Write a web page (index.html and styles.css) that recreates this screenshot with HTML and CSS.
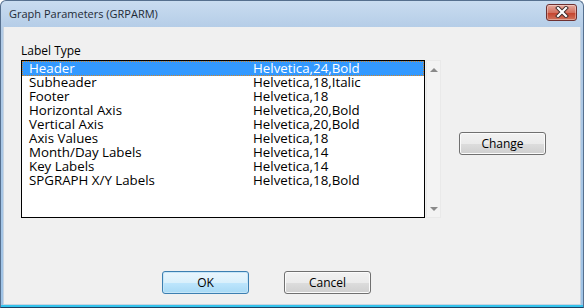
FILE: index.html
```html
<!DOCTYPE html>
<html lang="en">
<head>
  <meta charset="UTF-8">
  <title>Graph Parameters (GRPARM)</title>
  <link rel="stylesheet" href="styles.css">
</head>
<body>

<div class="window">
  <div class="titlebar">
    <span class="title">Graph Parameters (GRPARM)</span>
    <div class="close">
      <svg width="18" height="12" viewBox="0 0 18 12">
        <path d="M5 2 L13 10 M13 2 L5 10" stroke="#3b2a2a" stroke-width="4" stroke-linecap="square"/>
        <path d="M5 2 L13 10 M13 2 L5 10" stroke="#ffffff" stroke-width="2.2" stroke-linecap="square"/>
      </svg>
    </div>
  </div>

  <div class="client">
    <div class="main">
      <div class="list-col">
        <div class="caption">Label Type</div>
        <div class="list-wrap">
          <ul class="listbox">
            <li class="selected"><span class="name">Header</span><span>Helvetica,24,Bold</span></li>
            <li><span class="name">Subheader</span><span>Helvetica,18,Italic</span></li>
            <li><span class="name">Footer</span><span>Helvetica,18</span></li>
            <li><span class="name">Horizontal Axis</span><span>Helvetica,20,Bold</span></li>
            <li><span class="name">Vertical Axis</span><span>Helvetica,20,Bold</span></li>
            <li><span class="name">Axis Values</span><span>Helvetica,18</span></li>
            <li><span class="name">Month/Day Labels</span><span>Helvetica,14</span></li>
            <li><span class="name">Key Labels</span><span>Helvetica,14</span></li>
            <li><span class="name">SPGRAPH X/Y Labels</span><span>Helvetica,18,Bold</span></li>
          </ul>
          <div class="scrollbar">
            <span class="arrow up"></span>
            <span class="arrow down"></span>
          </div>
        </div>
      </div>
      <button class="btn change">Change</button>
    </div>

    <div class="actions">
      <button class="btn default">OK</button>
      <button class="btn">Cancel</button>
    </div>
  </div>
</div>

</body>
</html>
```

FILE: styles.css
```css
* {
  box-sizing: border-box;
}
body {
  margin: 0;
  font-family: 'Open Sans', 'Noto Sans', sans-serif;
  font-size: 12px;
  color: #000;
  background: #fff;
}
.window {
  width: 584px;
  height: 308px;
  display: flex;
  flex-direction: column;
  border: 1px solid #56708f;
  border-bottom-color: #1a3f63;
  border-radius: 6px 6px 0 0;
  background: linear-gradient(#c9dcf0, #b2cbe6 30px, #9fc3e6);
  padding: 0 2px 2px 2px;
  box-shadow: inset 0 -2px 0 #33c3ec;
}
.titlebar {
  height: 26px;
  display: flex;
  align-items: center;
  justify-content: space-between;
  padding: 0 4px 0 6px;
}
.title {
  font-size: 11px;
  color: #1e2a36;
  margin-top: -1px;
}
.close {
  width: 31px;
  height: 17px;
  margin-top: -4px;
  border: 1px solid #6e3030;
  border-radius: 3px;
  background: linear-gradient(#e6a99d, #d2705f 50%, #c4442f 55%, #d0735c);
  display: flex;
  align-items: center;
  justify-content: center;
  box-shadow: inset 0 0 0 1px rgba(255,255,255,0.35);
}
.client {
  flex: 1;
  background: #f0f0f0;
  border: 1px solid #c9d4e0;
  border-top: none;
  display: flex;
  flex-direction: column;
}
.main {
  display: flex;
  padding: 14px 0 0 17px;
}
.caption {
  height: 19px;
  line-height: 16px;
  padding-top: 2px;
}
.list-wrap {
  display: flex;
  gap: 1px;
}
.listbox {
  list-style: none;
  margin: 0;
  padding: 0;
  width: 404px;
  height: 158px;
  border: 1px solid #000;
  background: #fff;
  font-size: 13.3px;
}
.listbox li {
  display: flex;
  height: 14px;
  line-height: 15px;
  padding-left: 7px;
}
.listbox .name {
  width: 224px;
}
.listbox li.selected {
  background: #3399ff;
  color: #fff;
  outline: 1px dotted #d0852a;
  outline-offset: -1px;
  height: 15px;
  margin-bottom: -1px;
}
.scrollbar {
  width: 15px;
  height: 158px;
  background: #f3f3f3;
  border: 1px solid #e9e9e9;
  display: flex;
  flex-direction: column;
  justify-content: space-between;
  align-items: center;
  padding: 7px 0 6px;
}
.arrow {
  width: 0;
  height: 0;
  border-left: 4px solid transparent;
  border-right: 4px solid transparent;
}
.arrow.up {
  border-bottom: 4px solid #8a8a8a;
}
.arrow.down {
  border-top: 4px solid #8a8a8a;
}
.btn {
  width: 87px;
  height: 23px;
  font-family: 'Open Sans', 'Noto Sans', sans-serif;
  font-size: 12px;
  color: #000;
  border: 1px solid #707070;
  border-radius: 3px;
  background: linear-gradient(#f2f2f2, #ebebeb 50%, #dddddd 51%, #cfcfcf);
  box-shadow: inset 0 0 0 1px #fbfbfb;
  padding: 0;
}
.btn.change {
  margin: 91px 0 0 18px;
}
.btn.default {
  border-color: #3c7fb1;
  background: linear-gradient(#eaf6fd, #d9f0fc 50%, #bee6fd 51%, #a7d9f5);
  box-shadow: inset 0 0 0 1px #c6e6f8;
}
.actions {
  display: flex;
  gap: 35px;
  padding: 53px 0 0 158px;
}
```
